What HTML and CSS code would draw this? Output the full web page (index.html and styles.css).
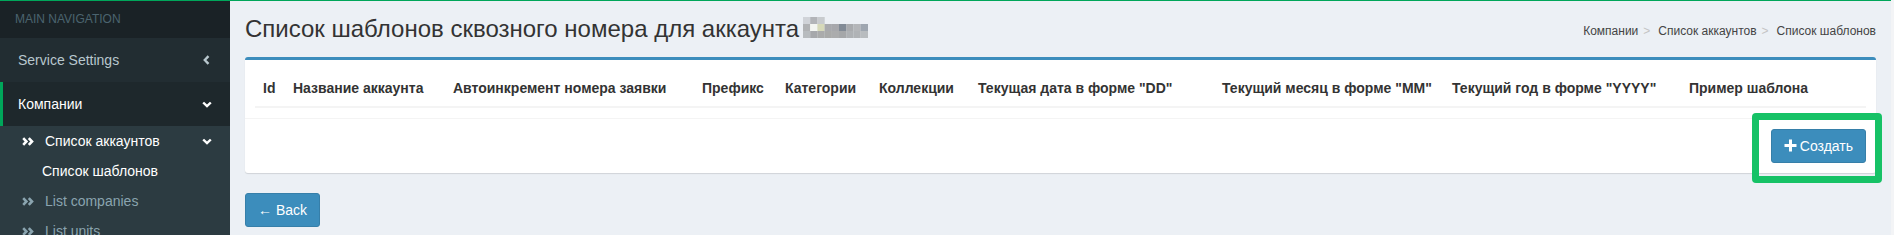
FILE: index.html
```html
<!DOCTYPE html>
<html lang="ru">
<head>
<meta charset="utf-8">
<title>Список шаблонов</title>
<link rel="stylesheet" href="styles.css">
</head>
<body>
<div class="app">
  <aside class="sidebar">
    <div class="nav-header">MAIN NAVIGATION</div>
    <div class="nav-item">
      <span class="nav-label">Service Settings</span>
      <svg class="ico-left" width="7" height="10" viewBox="0 0 7 10"><polyline points="5.5,1.2 1.8,5 5.5,8.8" fill="none" stroke="#b8c7ce" stroke-width="2.4"/></svg>
    </div>
    <div class="nav-item active">
      <span class="nav-label">Компании</span>
      <svg class="ico-down" width="10" height="7" viewBox="0 0 10 7"><polyline points="1.2,1.5 5,5.2 8.8,1.5" fill="none" stroke="#ffffff" stroke-width="2.4"/></svg>
    </div>
    <div class="submenu">
      <div class="sub-item open">
        <svg class="ico-dbl" width="12" height="9" viewBox="0 0 12 9"><polyline points="1.2,1.2 4.4,4.5 1.2,7.8" fill="none" stroke="#ffffff" stroke-width="2.6"/><polyline points="6.8,1.2 10,4.5 6.8,7.8" fill="none" stroke="#ffffff" stroke-width="2.6"/></svg>
        <span class="sub-label">Список аккаунтов</span>
        <svg class="ico-down sub-down" width="10" height="7" viewBox="0 0 10 7"><polyline points="1.2,1.5 5,5.2 8.8,1.5" fill="none" stroke="#ffffff" stroke-width="2.4"/></svg>
      </div>
      <div class="sub-item third">Список шаблонов</div>
      <div class="sub-item">
        <svg class="ico-dbl" width="12" height="9" viewBox="0 0 12 9"><polyline points="1.2,1.2 4.4,4.5 1.2,7.8" fill="none" stroke="#8aa4af" stroke-width="2.6"/><polyline points="6.8,1.2 10,4.5 6.8,7.8" fill="none" stroke="#8aa4af" stroke-width="2.6"/></svg>
        <span class="sub-label">List companies</span>
      </div>
      <div class="sub-item">
        <svg class="ico-dbl" width="12" height="9" viewBox="0 0 12 9"><polyline points="1.2,1.2 4.4,4.5 1.2,7.8" fill="none" stroke="#8aa4af" stroke-width="2.6"/><polyline points="6.8,1.2 10,4.5 6.8,7.8" fill="none" stroke="#8aa4af" stroke-width="2.6"/></svg>
        <span class="sub-label">List units</span>
      </div>
    </div>
  </aside>

  <main class="content-wrapper">
    <header class="content-header">
      <h1>Список шаблонов сквозного номера для аккаунта <svg class="mosaic" width="65" height="21" viewBox="0 0 65 21">
        <rect x="0" y="0" width="7.3" height="7" fill="#d0d3d8"/>
        <rect x="7.2" y="0" width="7.3" height="7" fill="#b2b4b8"/>
        <rect x="14.4" y="0" width="7.3" height="7" fill="#c8cbce"/>
        <rect x="0" y="7" width="7.3" height="7" fill="#b0b2b4"/>
        <rect x="7.2" y="7" width="7.3" height="7" fill="#f3f5f2"/>
        <rect x="14.4" y="7" width="7.3" height="7" fill="#d6d9b9"/>
        <rect x="21.6" y="7" width="7.3" height="7" fill="#a8a9ad"/>
        <rect x="28.8" y="7" width="7.3" height="7" fill="#a7a8ac"/>
        <rect x="36" y="7" width="7.3" height="7" fill="#828b96"/>
        <rect x="43.2" y="7" width="7.3" height="7" fill="#a9abae"/>
        <rect x="50.4" y="7" width="7.3" height="7" fill="#b4b6b9"/>
        <rect x="57.6" y="7" width="7.4" height="7" fill="#9ea6b0"/>
        <rect x="0" y="14" width="7.3" height="7" fill="#b8bcbf"/>
        <rect x="7.2" y="14" width="7.3" height="7" fill="#a6a8ab"/>
        <rect x="14.4" y="14" width="7.3" height="7" fill="#aaabab"/>
        <rect x="21.6" y="14" width="7.3" height="7" fill="#a9aaa9"/>
        <rect x="28.8" y="14" width="7.3" height="7" fill="#abacad"/>
        <rect x="36" y="14" width="7.3" height="7" fill="#a5a7a9"/>
        <rect x="43.2" y="14" width="7.3" height="7" fill="#aeb1b4"/>
        <rect x="50.4" y="14" width="7.3" height="7" fill="#b0b3b6"/>
        <rect x="57.6" y="14" width="7.4" height="7" fill="#b8bcbf"/>
      </svg></h1>
      <nav class="breadcrumb">
        <span class="crumb">Компании</span><span class="sep">&gt;</span><span class="crumb">Список аккаунтов</span><span class="sep">&gt;</span><span class="crumb">Список шаблонов</span>
      </nav>
    </header>

    <section class="content">
      <div class="box">
        <div class="box-body">
          <table class="table">
            <thead>
              <tr>
                <th class="c-id">Id</th>
                <th class="c-name">Название аккаунта</th>
                <th class="c-inc">Автоинкремент номера заявки</th>
                <th class="c-pre">Префикс</th>
                <th class="c-cat">Категории</th>
                <th class="c-col">Коллекции</th>
                <th class="c-dd">Текущая дата в форме "DD"</th>
                <th class="c-mm">Текущий месяц в форме "MM"</th>
                <th class="c-yy">Текущий год в форме "YYYY"</th>
                <th class="c-ex">Пример шаблона</th>
              </tr>
            </thead>
          </table>
        </div>
        <div class="box-footer">
          <span class="btn-wrap">
            <button class="btn btn-primary"><svg class="ico-plus" width="13" height="13" viewBox="0 0 13 13"><rect x="5" y="0.5" width="3" height="12" fill="#fff"/><rect x="0.5" y="5" width="12" height="3" fill="#fff"/></svg>Создать</button>
            <span class="highlight"></span>
          </span>
        </div>
      </div>
      <button class="btn btn-primary back"><span class="arrow">←</span> Back</button>
    </section>
  </main>
</div>
<div class="edge"></div>
</body>
</html>
```

FILE: styles.css
```css
* { box-sizing: border-box; }
html, body { margin: 0; padding: 0; }
body {
  display: flex;
  width: 1894px;
  height: 235px;
  overflow: hidden;
  font-family: "Liberation Sans", Arial, sans-serif;
  font-size: 14px;
  line-height: 20px;
  color: #333;
  background: #ecf0f5;
}
.app {
  flex: 1;
  display: flex;
  border-top: 1px solid #00a65a;
  min-width: 0;
}
.edge {
  width: 3px;
  background: #f3f4f6;
}

/* Sidebar */
.sidebar {
  width: 230px;
  flex: none;
  background: #222d32;
  display: flex;
  flex-direction: column;
  overflow: hidden;
}
.sidebar > * { flex-shrink: 0; }
.nav-header {
  background: #1a2226;
  color: #4b646f;
  font-size: 12px;
  line-height: 17px;
  padding: 10px 25px 10px 15px;
}
.nav-item {
  display: flex;
  align-items: center;
  height: 44px;
  padding: 0 18px 0 15px;
  border-left: 3px solid transparent;
  color: #b8c7ce;
}
.nav-item .nav-label { flex: 1; }
.nav-item.active {
  background: #1e282c;
  border-left-color: #00a65a;
  color: #fff;
}
.ico-left { margin-right: 2px; }
.submenu {
  background: #2c3b41;
  flex: 1 0 auto;
}
.sub-item {
  display: flex;
  align-items: center;
  height: 30px;
  padding: 0 18px 0 22px;
  color: #8aa4af;
}
.sub-item.open { color: #fff; }
.ico-dbl { flex: none; }
.sub-label { margin-left: 11px; flex: 1; }
.sub-item.third {
  color: #fff;
  padding-left: 42px;
}

/* Content */
.content-wrapper {
  flex: 1;
  min-width: 0;
}
.content-header {
  display: flex;
  justify-content: space-between;
  align-items: flex-start;
  padding: 15px 15px 0 15px;
}
.content-header h1 {
  margin: 0;
  font-size: 24px;
  font-weight: normal;
  line-height: 1.1;
  color: #333;
}
.mosaic { vertical-align: -1px; margin-left: -3px; }
.breadcrumb {
  display: flex;
  font-size: 12px;
  line-height: 17px;
  margin-top: 7px;
  color: #444;
}
.sep {
  color: #c4c4c4;
  margin: 0 8px 0 5px;
}
.content {
  padding: 15px;
}
.box {
  background: #fff;
  border-top: 3px solid #3c8dbc;
  border-radius: 3px;
  box-shadow: 0 1px 1px rgba(0, 0, 0, 0.12);
  margin-bottom: 20px;
}
.box-body { padding: 10px; }
.table {
  width: 100%;
  border-collapse: collapse;
  table-layout: fixed;
}
.table th {
  text-align: left;
  font-weight: bold;
  padding: 8px;
  line-height: 20px;
  white-space: nowrap;
  border-bottom: 2px solid #f4f4f4;
  color: #333;
}
.c-id { width: 30px; }
.c-name { width: 160px; }
.c-inc { width: 249px; }
.c-pre { width: 83px; }
.c-cat { width: 94px; }
.c-col { width: 99px; }
.c-dd { width: 244px; }
.c-mm { width: 230px; }
.c-yy { width: 237px; }
.c-ex { width: auto; }
.box-footer {
  border-top: 1px solid #f4f4f4;
  padding: 10px;
  display: flex;
  justify-content: flex-end;
}
.btn-wrap { position: relative; display: flex; }
.btn {
  font-family: "Liberation Sans", Arial, sans-serif;
  font-size: 14px;
  line-height: 20px;
  padding: 6px 12px;
  border-radius: 3px;
  border: 1px solid #367fa9;
  background: #3c8dbc;
  color: #fff;
  display: inline-flex;
  align-items: center;
  cursor: pointer;
}
.ico-plus { margin-right: 3px; margin-top: -1px; }
.highlight {
  position: absolute;
  left: -19px;
  right: -16px;
  top: -16px;
  bottom: -20px;
  border: 7px solid #16c266;
  border-radius: 4px;
  pointer-events: none;
}
.back { padding-left: 12px; }
.arrow { font-family: "Liberation Sans", "DejaVu Sans", sans-serif; font-size: 14px; margin-right: 4px; }
```
